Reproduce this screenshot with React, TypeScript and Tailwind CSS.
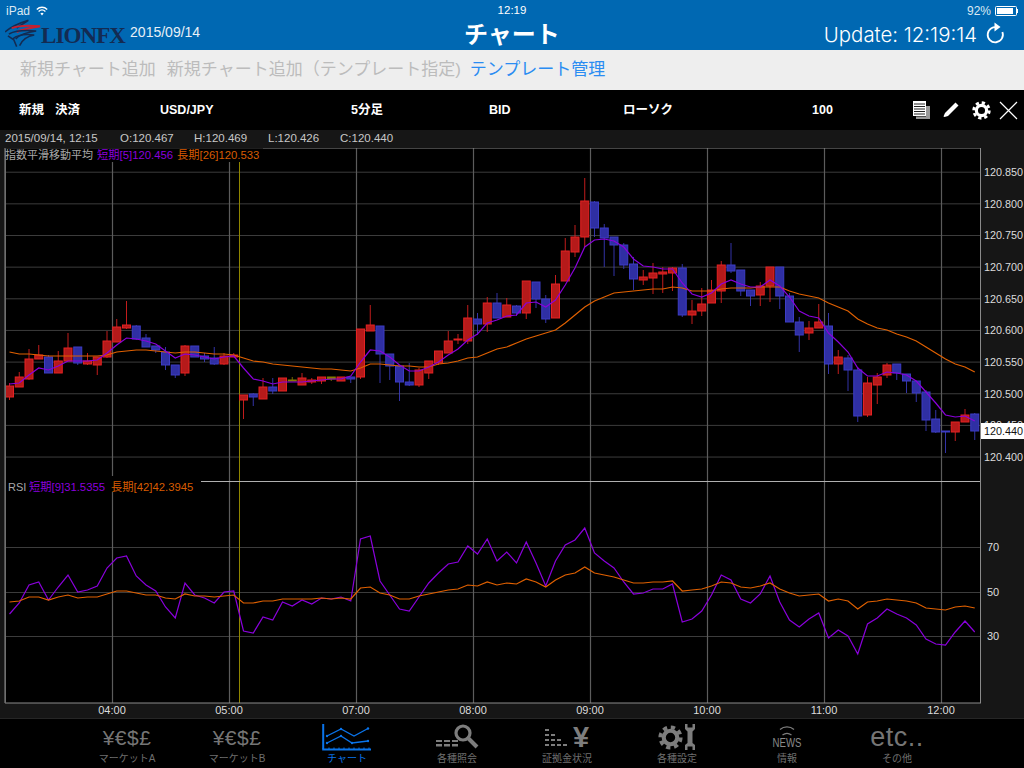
import React from 'react';

// r = red, b = blue, g = gold doji: [kind, bodyTop, bodyBottom, wickTop, wickBottom]
type Candle = [string, number, number, number, number];

const candles: Candle[] = [
  ['r', 386, 397, 383, 400], ['r', 377, 387, 372, 387], ['r', 359, 379, 349, 380], ['r', 355, 359, 345, 359],
  ['b', 357, 373, 355, 373], ['r', 361, 373, 351, 373], ['r', 348, 361, 333, 361], ['b', 347, 363, 347, 365],
  ['r', 361, 364, 353, 365], ['r', 357, 365, 357, 375], ['r', 341, 357, 331, 358], ['r', 327, 342, 319, 342],
  ['r', 325, 328, 301, 329], ['b', 326, 339, 325, 340], ['b', 338, 347, 334, 347], ['b', 346, 350, 346, 353],
  ['b', 352, 365, 347, 370], ['b', 365, 375, 365, 378], ['r', 346, 373, 345, 376], ['b', 346, 357, 346, 357],
  ['b', 356, 359, 353, 362], ['b', 358, 364, 347, 365], ['r', 356, 364, 353, 365], ['r', 355, 357, 353, 357],
  ['r', 395, 400, 395, 419], ['b', 394, 397, 393, 406], ['r', 387, 399, 378, 399], ['b', 387, 391, 378, 394],
  ['r', 378, 391, 378, 391], ['g', 380, 381, 377, 381], ['r', 378, 385, 373, 385], ['r', 380, 382, 378, 384],
  ['r', 377, 381, 377, 384], ['g', 377, 379, 377, 381], ['r', 377, 381, 377, 381], ['b', 377, 379, 377, 383],
  ['r', 329, 377, 329, 379], ['r', 325, 331, 305, 331], ['b', 326, 354, 326, 383], ['b', 354, 366, 354, 380],
  ['b', 366, 382, 366, 401], ['b', 382, 385, 363, 386], ['r', 370, 385, 368, 387], ['r', 361, 373, 361, 379],
  ['r', 351, 363, 351, 365], ['r', 341, 353, 331, 353], ['r', 339, 340, 334, 344], ['r', 318, 341, 305, 344],
  ['b', 319, 324, 313, 335], ['r', 303, 324, 297, 332], ['b', 303, 318, 293, 318], ['r', 305, 317, 298, 317],
  ['b', 306, 313, 305, 316], ['r', 281, 313, 281, 319], ['b', 282, 299, 282, 308], ['b', 299, 319, 295, 323],
  ['r', 284, 318, 275, 318], ['r', 251, 281, 238, 281], ['r', 237, 252, 225, 257], ['r', 201, 237, 178, 247],
  ['b', 202, 228, 201, 237], ['b', 228, 238, 224, 267], ['b', 237, 245, 237, 276], ['b', 245, 265, 243, 269],
  ['b', 264, 279, 257, 290], ['r', 277, 280, 270, 285], ['r', 273, 278, 263, 294], ['r', 272, 274, 267, 293],
  ['r', 268, 273, 267, 291], ['b', 268, 315, 264, 317], ['r', 311, 315, 300, 324], ['r', 304, 311, 288, 316],
  ['r', 290, 303, 280, 303], ['r', 265, 291, 261, 303], ['b', 265, 271, 243, 273], ['b', 270, 291, 270, 296],
  ['b', 290, 296, 290, 306], ['r', 286, 295, 282, 306], ['r', 267, 286, 267, 302], ['b', 267, 296, 267, 309],
  ['b', 296, 322, 293, 322], ['b', 322, 335, 317, 352], ['r', 328, 333, 321, 340], ['r', 322, 328, 304, 328],
  ['b', 326, 364, 313, 374], ['r', 357, 364, 350, 374], ['b', 358, 370, 355, 391], ['b', 370, 416, 367, 422],
  ['r', 383, 415, 377, 417], ['r', 377, 385, 373, 404], ['r', 365, 375, 363, 378], ['b', 364, 373, 364, 380],
  ['b', 374, 381, 374, 393], ['b', 381, 393, 381, 402], ['b', 392, 420, 390, 431], ['b', 419, 432, 410, 433],
  ['b', 431, 432, 431, 453], ['r', 422, 432, 422, 441], ['r', 415, 422, 409, 422], ['b', 414, 431, 413, 440],
];

const maShort = [
  384, 383, 375, 368, 370, 366, 361, 361, 361, 360, 353, 345, 338, 339, 341, 344, 351, 358, 354, 355,
  357, 359, 357, 356, 368, 379, 381, 384, 382, 382, 382, 381, 380, 379, 379, 376, 362, 350, 351, 357,
  365, 371, 371, 367, 362, 355, 349, 340, 334, 323, 320, 316, 315, 303, 302, 307, 300, 285, 268, 247,
  240, 239, 241, 247, 259, 266, 267, 269, 269, 283, 294, 297, 293, 284, 280, 284, 287, 287, 280, 286,
  297, 311, 316, 318, 333, 342, 352, 368, 376, 376, 372, 373, 375, 381, 392, 403, 415, 417, 416, 421,
];
const maLong = [
  352, 354, 354, 355, 356, 356, 356, 356, 356, 356, 355, 352, 351, 350, 350, 351, 352, 353, 352, 352,
  353, 354, 354, 355, 358, 361, 362, 364, 365, 366, 367, 368, 369, 369, 370, 371, 368, 364, 364, 365,
  366, 366, 367, 367, 364, 363, 361, 358, 357, 353, 349, 347, 343, 339, 336, 333, 330, 323, 315, 307,
  301, 297, 293, 292, 291, 290, 289, 289, 287, 288, 291, 291, 291, 289, 288, 288, 288, 287, 287, 287,
  291, 294, 296, 298, 303, 307, 311, 319, 324, 328, 330, 334, 337, 341, 347, 353, 359, 364, 367, 372,
];
const rsiShort = [
  614, 603, 585, 582, 600, 587, 575, 592, 590, 586, 568, 558, 556, 576, 585, 591, 607, 618, 583, 595,
  598, 603, 592, 591, 631, 633, 617, 620, 602, 606, 600, 604, 598, 599, 597, 601, 539, 536, 581, 595,
  609, 611, 597, 583, 573, 564, 562, 546, 554, 539, 561, 552, 563, 542, 563, 586, 561, 545, 540, 528,
  553, 561, 568, 582, 594, 593, 589, 589, 584, 622, 619, 611, 595, 575, 580, 599, 603, 594, 576, 602,
  620, 627, 619, 613, 638, 630, 636, 654, 624, 618, 609, 614, 618, 625, 639, 644, 645, 632, 621, 632,
];
const rsiLong = [
  602, 601, 597, 597, 600, 597, 595, 598, 597, 597, 594, 591, 591, 593, 595, 595, 598, 599, 594, 596,
  596, 597, 596, 595, 603, 603, 601, 601, 599, 599, 599, 599, 598, 599, 598, 599, 588, 587, 593, 595,
  599, 599, 596, 594, 592, 590, 589, 585, 586, 582, 585, 583, 584, 579, 582, 587, 580, 575, 573, 567,
  573, 575, 577, 580, 583, 583, 582, 582, 581, 591, 590, 589, 586, 582, 583, 587, 588, 586, 583, 589,
  593, 596, 595, 594, 601, 599, 601, 609, 602, 601, 599, 600, 601, 603, 608, 609, 610, 607, 606, 608,
];

const priceLabels = ['120.850', '120.800', '120.750', '120.700', '120.650', '120.600', '120.550', '120.500', '120.450', '120.400'];
const gridX = [112, 229, 356, 473, 590, 707, 824, 941];
const timeLabels: [number, string][] = [[112, '04:00'], [229, '05:00'], [356, '07:00'], [473, '08:00'], [590, '09:00'], [707, '10:00'], [824, '11:00'], [941, '12:00']];

const candleX = (i: number) => 9.5 + 9.75 * i;
// the svg starts at y=148 of the page
const toPoints = (ys: number[]) => ys.map((y, i) => `${candleX(i)},${y - 148}`).join(' ');

const Cog = ({ size, color }: { size: number; color: string }) => (
  <svg width={size} height={size} viewBox="0 0 24 24" fill="none">
    <circle cx="12" cy="12" r="6.5" stroke={color} strokeWidth="4" />
    <circle cx="12" cy="12" r="9.8" stroke={color} strokeWidth="3.6" strokeDasharray="4.1 3.6" />
  </svg>
);

const Chart = () => (
  <svg width="1024" height="570" viewBox="0 0 1024 570" className="block bg-[#161616]">
    <rect x="5" y="0" width="975.5" height="555" fill="#000" />
    {priceLabels.map((_, i) => (
      <line key={i} x1="5" x2="980" y1={24.2 + 31.65 * i} y2={24.2 + 31.65 * i} stroke="#3c3c3c" />
    ))}
    {[399, 444, 488].map((y) => (
      <line key={y} x1="5" x2="980" y1={y + 0.5} y2={y + 0.5} stroke="#3c3c3c" />
    ))}
    {gridX.map((x) => (
      <line key={x} x1={x + 0.5} x2={x + 0.5} y1="0" y2="555" stroke="#5c5c5c" strokeWidth="1.2" />
    ))}
    <line x1="239.5" x2="239.5" y1="0" y2="555" stroke="#8f8500" />

    {candles.map(([kind, top, bottom, wickTop, wickBottom], i) => {
      const x = candleX(i);
      const fill = kind === 'r' ? '#b51a1a' : kind === 'b' ? '#2f2fa3' : '#857c00';
      const edge = kind === 'r' ? '#e42222' : kind === 'b' ? '#3d3dc4' : '#857c00';
      return (
        <g key={i}>
          <line x1={x} x2={x} y1={wickTop - 148} y2={wickBottom - 148} stroke={edge} opacity="0.85" />
          <rect x={x - 4} y={top - 148} width="8" height={Math.max(bottom - top, 1)} fill={fill} stroke={edge} strokeWidth="1" />
        </g>
      );
    })}
    <polyline points={toPoints(maLong)} fill="none" stroke="#e06000" strokeWidth="1.2" />
    <polyline points={toPoints(maShort)} fill="none" stroke="#8a00dc" strokeWidth="1.2" />
    <polyline points={toPoints(rsiShort)} fill="none" stroke="#8a00dc" strokeWidth="1.2" />
    <polyline points={toPoints(rsiLong)} fill="none" stroke="#e06000" strokeWidth="1.2" />

    {/* frame */}
    <rect x="5.5" y="0" width="975" height="555" fill="none" stroke="#8a8a8a" />
    <rect x="0" y="0" width="5" height="555" fill="#161616" />
    <line x1="5" x2="5" y1="0" y2="555" stroke="#666" strokeWidth="1.5" />
    <line x1="201" x2="980" y1="333.5" y2="333.5" stroke="#b0b0b0" />

    {/* legends */}
    <rect x="6" y="0" width="257" height="14" fill="#000" />
    <line x1="5" x2="263" y1="0" y2="0" stroke="#3c3c3c" />
    <text x="5" y="10.5" fontSize="11" fill="#a8a8a8">指数平滑移動平均</text>
    <text x="97" y="10.5" fontSize="11.3" fill="#8a00dc">短期[5]120.456</text>
    <text x="177" y="10.5" fontSize="11.3" fill="#d85c00">長期[26]120.533</text>
    <rect x="6" y="328" width="195" height="16" fill="#000" />
    <text x="8" y="343" fontSize="11" fill="#a8a8a8">RSI</text>
    <text x="29" y="343" fontSize="11.3" fill="#8a00dc">短期[9]31.5355</text>
    <text x="111" y="343" fontSize="11.3" fill="#d85c00">長期[42]42.3945</text>

    {/* axes; the 120.450 label sits behind the current price tag */}
    {priceLabels.map((label, i) => (
      <text key={label} x="984" y={28 + 31.65 * i} fontSize="10.8" fill="#dcdcdc">{label}</text>
    ))}
    <rect x="981" y="275" width="43" height="16" fill="#fff" />
    <text x="984" y="287" fontSize="10.8" fill="#111">120.440</text>
    {[[399, '70'], [444, '50'], [488, '30']].map(([y, label]) => (
      <text key={label} x="987" y={Number(y) + 4} fontSize="11" fill="#dcdcdc">{label}</text>
    ))}
    {timeLabels.map(([x, label]) => (
      <text key={label} x={x} y="566" fontSize="11" fill="#dcdcdc" textAnchor="middle">{label}</text>
    ))}
  </svg>
);

const tabs = [
  {
    label: 'マーケットA',
    icon: <span className="text-[21px] leading-none text-[#757575] tracking-[0.5px]">¥€$£</span>,
  },
  {
    label: 'マーケットB',
    icon: <span className="text-[21px] leading-none text-[#757575] tracking-[0.5px]">¥€$£</span>,
  },
  {
    label: 'チャート',
    active: true,
    icon: (
      <svg width="50" height="28" viewBox="0 0 50 28" fill="none" stroke="#0a74ea">
        <path d="M1.2 1v25.6H49" strokeWidth="2" />
        <path d="M1 26V25M7 26v-1.5M12 26v-1.5M17 26v-1.5M22 26v-1.5M27 26v-1.5M32 26v-1.5M37 26v-1.5M42 26v-1.5M47 26v-1.5" strokeWidth="1" />
        <path d="M5 13l14-7 13 7 14-7.5" strokeWidth="1.3" />
        <path d="M5 20l14-7 11 7 16-2" strokeWidth="1.3" />
        <g fill="#0a74ea" stroke="none">
          <circle cx="5" cy="13" r="1.2" /><circle cx="19" cy="6" r="1.2" /><circle cx="46" cy="5.5" r="1.2" />
          <circle cx="5" cy="20" r="1.2" /><circle cx="19" cy="13" r="1.2" /><circle cx="30" cy="20" r="1.2" /><circle cx="46" cy="18" r="1.2" />
        </g>
      </svg>
    ),
  },
  {
    label: '各種照会',
    icon: (
      <svg width="44" height="26" viewBox="0 0 44 26" fill="none">
        <g fill="#7d7d7d">
          <rect x="1" y="16" width="6" height="2" /><rect x="9" y="16" width="6" height="2" /><rect x="17" y="16" width="6" height="2" />
          <rect x="1" y="20" width="6" height="2.5" /><rect x="9" y="20" width="6" height="2.5" /><rect x="17" y="20" width="6" height="2.5" />
        </g>
        <circle cx="28" cy="9" r="7" stroke="#7d7d7d" strokeWidth="3.2" />
        <path d="M33.5 14.5L42 23" stroke="#7d7d7d" strokeWidth="4" />
      </svg>
    ),
  },
  {
    label: '証拠金状況',
    icon: (
      <div className="flex items-end">
        <svg width="28" height="22" viewBox="0 0 28 22" fill="#7d7d7d">
          <rect x="0" y="2" width="4" height="2" /><rect x="0" y="7" width="4" height="2" /><rect x="6" y="7" width="4" height="2" />
          <rect x="0" y="12" width="4" height="2" /><rect x="6" y="12" width="4" height="2" /><rect x="12" y="12" width="4" height="2" />
          <rect x="0" y="17" width="4" height="2" /><rect x="6" y="17" width="4" height="2" /><rect x="12" y="17" width="4" height="2" /><rect x="18" y="17" width="4" height="2" />
        </svg>
        <span className="text-[29px] leading-[24px] font-bold text-[#7d7d7d]">¥</span>
      </div>
    ),
  },
  {
    label: '各種設定',
    icon: (
      <div className="flex items-center gap-[1px]">
        <Cog size={25} color="#7d7d7d" />
        <svg width="12" height="26" viewBox="0 0 12 26" fill="#7d7d7d">
          <path d="M1 0h2.5v3.5h5V0H11v5L8.5 7.5V19L11 21v5H8.5v-3.5h-5V26H1v-5l2.5-2V7.5L1 5z" />
        </svg>
      </div>
    ),
  },
  {
    label: '情報',
    icon: (
      <div className="flex flex-col items-center">
        <svg width="16" height="13" viewBox="0 0 16 13" fill="none" stroke="#7d7d7d" strokeWidth="1.3">
          <path d="M1 4.5C5 1 11 1 15 4.5" />
          <path d="M3.5 10C6.5 7.8 9.5 7.8 12.5 10" />
        </svg>
        <span className="text-[12px] leading-[11px] scale-x-[0.8] text-[#8a8a8a]">NEWS</span>
      </div>
    ),
  },
  {
    label: 'その他',
    icon: <span className="text-[27px] leading-none tracking-[0.5px] text-[#757575] font-medium">etc..</span>,
  },
];

export default function App() {
  return (
    <div className="w-[1024px] h-[768px] overflow-hidden flex flex-col bg-black font-['Liberation_Sans','Noto_Sans_CJK_JP',sans-serif]">
      {/* header */}
      <header className="h-[50px] bg-[#0068b2] text-white flex flex-col shrink-0">
        <div className="h-[20px] pt-[1px] grid grid-cols-3 items-center px-[6px] text-[12px] text-[#dbe8f3]">
          <div className="flex items-center gap-[6px]">
            <span>iPad</span>
            <svg width="12" height="10" viewBox="0 0 12 10" fill="none" stroke="#fff" strokeWidth="1.4">
              <path d="M0.8 3.4C3.8 0.6 8.2 0.6 11.2 3.4" />
              <path d="M2.6 5.4C4.6 3.6 7.4 3.6 9.4 5.4" />
              <path d="M6 9.5L4.4 7.4C5.4 6.6 6.6 6.6 7.6 7.4z" fill="#fff" stroke="none" />
            </svg>
          </div>
          <div className="text-center text-[11.5px] text-white">12:19</div>
          <div className="flex items-center justify-end gap-[4px]">
            <span>92%</span>
            <div className="flex items-center">
              <div className="w-[22px] h-[10px] border border-white p-[1px] rounded-[1.5px]">
                <div className="w-[90%] h-full bg-white" />
              </div>
              <div className="w-[1px] h-[4px] bg-white" />
            </div>
          </div>
        </div>
        <div className="h-[30px] grid grid-cols-3 items-center">
          <div className="flex items-center pl-[5px]">
            <div className="flex items-center -mt-[5px]">
              <svg width="37" height="28" viewBox="0 0 38 28" fill="none" stroke="#132b52" strokeWidth="1.6">
                <path d="M0 13C6 8 14 4 24 1C18 5 14 7 12 9" />
                <path d="M7 9C14 6 24 6 36 7C26 9 18 10 12 13" stroke="#c8202f" strokeWidth="2" />
                <path d="M4 15C12 11 22 11 32 12C24 13 16 15 11 20" />
                <path d="M8 20C14 15 22 15 30 16C24 17 18 20 15 27" />
                <path d="M3 17L9 21L12 28" />
              </svg>
              <span className="font-['Liberation_Serif',serif] font-bold text-[23px] tracking-[-0.9px] leading-none text-[#132b52] -ml-[1px] mt-[5px]">LIONFX</span>
            </div>
            <span className="ml-[5px] -mt-[5px] text-[14px] text-[#e8f0f7]">2015/09/14</span>
          </div>
          <div className="text-center text-[24px] font-bold leading-none">チャート</div>
          <div className="flex items-center justify-end pr-[19px]">
            <span className="font-['Inter',sans-serif] font-light text-[20.4px] leading-none">Update: 12:19:14</span>
            <svg className="ml-[8px] -mt-[4px]" width="20" height="24" viewBox="0 0 20 24" fill="none" stroke="#fff" strokeWidth="1.8">
              <path d="M13 6.6A7.6 7.6 0 1 0 17.4 11" />
              <path d="M9.5 1.5L15.5 6L9.5 10.5z" fill="#fff" stroke="none" />
            </svg>
          </div>
        </div>
      </header>

      {/* menu */}
      <nav className="h-[40px] bg-[#eeeeee] flex items-center pl-[20px] text-[17px] shrink-0">
        <span className="text-[#bcbcbc]">新規チャート追加</span>
        <span className="ml-[11px] text-[#bcbcbc]">新規チャート追加（テンプレート指定)</span>
        <span className="ml-[9px] text-[#2a8cf2]">テンプレート管理</span>
      </nav>

      {/* toolbar */}
      <div className="h-[40px] bg-black flex items-center text-white text-[12.5px] font-bold shrink-0">
        <div className="w-[160px] pl-[19px] flex gap-[11px]">
          <span>新規</span>
          <span>決済</span>
        </div>
        <div className="w-[191px]">USD/JPY</div>
        <div className="w-[138px]">5分足</div>
        <div className="w-[134px]">BID</div>
        <div className="w-[189px]">ローソク</div>
        <div className="w-[100px]">100</div>
        <div className="flex items-center">
          <svg width="18" height="18" viewBox="0 0 18 18" fill="none">
            <rect x="1" y="0" width="13" height="15" fill="#fff" />
            <path d="M2 3h11M2 5.5h11M2 8h11M2 10.5h11M2 13h11" stroke="#222" />
            <rect x="14" y="5" width="4" height="13" fill="#999" />
            <rect x="4" y="15.5" width="14" height="2.5" fill="#999" />
          </svg>
          <svg className="ml-[13px]" width="16" height="16" viewBox="0 0 16 16" fill="#fff">
            <path d="M12.5 0.5L15.5 3.5L5 14L1.5 15L0.5 14.5L2 11z" />
          </svg>
          <div className="ml-[13px] flex">
            <Cog size={19} color="#fff" />
          </div>
          <svg className="ml-[8px]" width="19" height="19" viewBox="0 0 19 19" fill="none" stroke="#fff" strokeWidth="1.2">
            <path d="M1 1L18 18M18 1L1 18" />
          </svg>
        </div>
      </div>

      {/* ohlc */}
      <div className="h-[18px] bg-[#161616] flex items-center pl-[5px] text-[11.5px] text-[#c8c8c8] shrink-0">
        <span className="w-[115px]">2015/09/14, 12:15</span>
        <span className="w-[74px]">O:120.467</span>
        <span className="w-[74px]">H:120.469</span>
        <span className="w-[72px]">L:120.426</span>
        <span>C:120.440</span>
      </div>

      <Chart />

      {/* tab bar */}
      <footer className="h-[50px] bg-black border-t border-[#262626] flex justify-center shrink-0">
        {tabs.map((tab) => (
          <div key={tab.label} className="w-[110px] flex flex-col items-center">
            <div className="h-[33px] flex items-center justify-center pt-[3px]">{tab.icon}</div>
            <div className={`text-[10px] leading-[14px] ${tab.active ? 'text-[#0a74ea]' : 'text-[#6f6f6f]'}`}>{tab.label}</div>
          </div>
        ))}
      </footer>
    </div>
  );
}
